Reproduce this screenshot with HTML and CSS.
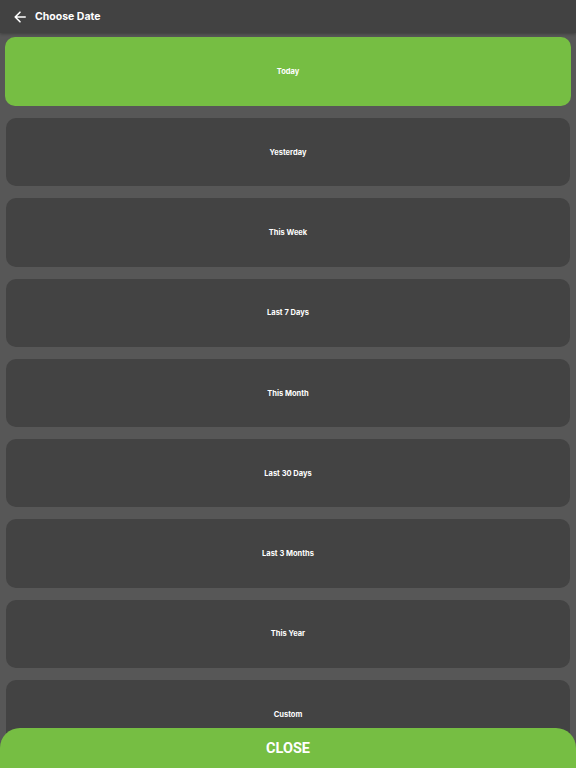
FILE: index.html
```html
<!DOCTYPE html>
<html lang="en">
<head>
    <meta charset="UTF-8">
    <title>Choose Date</title>
    <link rel="stylesheet" href="styles.css">
</head>
<body>

<div class="header">
    <button class="back">
        <svg width="12" height="12" viewBox="0 0 12 12">
            <path d="M11.2 6H1.2M6 1.2L1.2 6L6 10.8" fill="none" stroke="#fff" stroke-width="1.6" stroke-linecap="round" stroke-linejoin="round"/>
        </svg>
    </button>
    <div class="title">Choose Date</div>
</div>

<div class="list">
    <div class="option selected">Today</div>
    <div class="option">Yesterday</div>
    <div class="option">This Week</div>
    <div class="option">Last 7 Days</div>
    <div class="option">This Month</div>
    <div class="option">Last 30 Days</div>
    <div class="option">Last 3 Months</div>
    <div class="option">This Year</div>
    <div class="option">Custom</div>
</div>

<button class="close-button">CLOSE</button>

</body>
</html>
```

FILE: styles.css
```css
body {
    font-family: Inter, "Noto Sans", sans-serif;
    background: #575757;
    margin: 0;
    padding: 0;
    height: 768px;
    overflow: hidden;
}

.header {
    height: 33px;
    background-color: #424242;
    display: flex;
    align-items: center;
    padding: 0 14px;
    gap: 9px;
    box-shadow: 0 1px 3px rgba(0,0,0,0.3);
    position: relative;
    z-index: 1;
}

.header .back {
    background: none;
    border: none;
    padding: 0;
    width: 12px;
    height: 12px;
    display: flex;
}

.header .title {
    font-size: 10.5px;
    font-weight: bold;
    color: #fff;
}

.list {
    display: flex;
    flex-direction: column;
    gap: 12px;
    padding: 4px 6px 0;
}

.option {
    height: 68.3px;
    background-color: #434343;
    border-radius: 10px;
    display: flex;
    align-items: center;
    justify-content: center;
    color: #fff;
    font-size: 7.5px;
    font-weight: bold;
    flex-shrink: 0;
}

.option.selected {
    background-color: #76be43;
    height: 69px;
    margin: 0 -1px;
}

.close-button {
    position: fixed;
    left: 0;
    right: 0;
    bottom: 0;
    height: 40px;
    background-color: #76be43;
    border: none;
    border-radius: 20px 20px 0 0;
    color: #fff;
    font-family: Roboto, sans-serif;
    font-size: 14.5px;
    font-weight: bold;
    padding: 0;
}
```
